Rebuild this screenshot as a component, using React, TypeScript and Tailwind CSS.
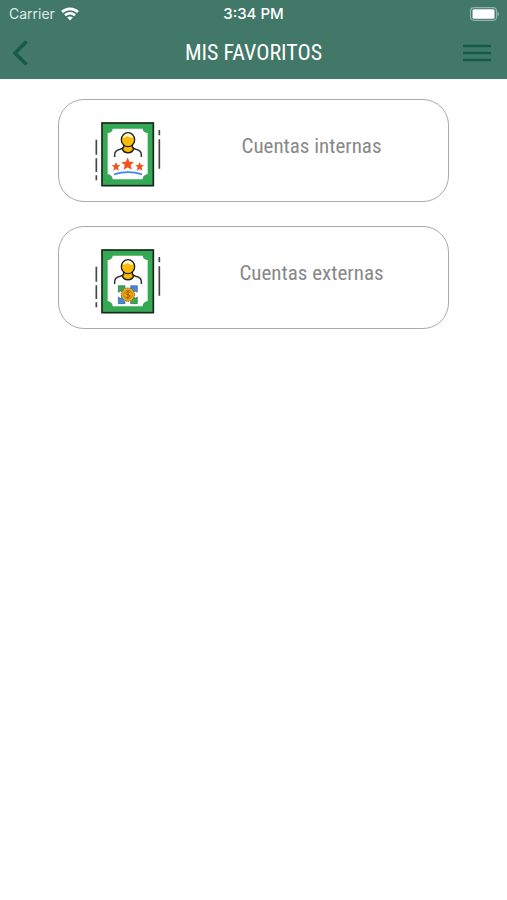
import type { ReactNode } from "react";

function BillFrame({ children }: { children: ReactNode }) {
  return (
    <svg viewBox="29 35 204 198" className="h-[66px] w-[68px] shrink-0" fill="none" aria-hidden="true">
      <rect x="50" y="38" width="154" height="188" fill="#35a853" stroke="#17271d" strokeWidth="5" />
      <path
        d="M82 55H172C172 62 178 68 187 68V192C178 192 172 199 172 207H82C82 199 76 192 67 192V68C76 68 82 62 82 55Z"
        fill="#fff"
      />
      <path d="M33 88V133M33 144V185M33 195V210M222 59V75M222 87V175" stroke="#444" strokeWidth="5" />
      <path
        d="M88 140V133C88 123 96 119 104 117L113 114M143 114L152 117C160 119 168 123 168 133V140"
        stroke="#333"
        strokeWidth="4.5"
      />
      <path d="M115 102V110L111 115C116 131 140 131 145 115L141 110V102Z" fill="#fbbc05" stroke="#222" strokeWidth="4.5" />
      <ellipse cx="128" cy="88" rx="20" ry="21" fill="#fbbc05" />
      <path d="M109 81C112 62 144 62 147 81C139 85 132 80 125 77C121 82 115 83 109 81Z" fill="#fff3d0" />
      <ellipse cx="128" cy="88" rx="20" ry="21" stroke="#222" strokeWidth="4" />
      {children}
    </svg>
  );
}

function InternalIcon() {
  return (
    <BillFrame>
      <path d="M127 141L132 154L146 155L136 164L139 178L127 171L115 178L118 164L108 155L122 154Z" fill="#f4511e" />
      <path d="M92 155L96 164L105 165L98 171L100 181L92 176L84 181L86 171L79 165L88 164Z" fill="#f4511e" />
      <path d="M163 155L167 164L176 165L169 171L171 181L163 176L155 181L157 171L150 165L159 164Z" fill="#f4511e" />
      <path d="M86 192Q128 179 170 192" stroke="#4285f4" strokeWidth="5" />
    </BillFrame>
  );
}

function ExternalIcon() {
  return (
    <BillFrame>
      <g stroke="#28463a" strokeWidth="1.5">
        <path d="M99 145H119V151L114 156L119 162L113 168L106 161L99 165Z" fill="#34a853" />
        <path d="M156 145H136V151L141 156L136 162L142 168L149 161L156 165Z" fill="#4285f4" />
        <path d="M99 199H119V193L114 188L119 182L113 176L106 183L99 179Z" fill="#4285f4" />
        <path d="M156 199H136V193L141 188L136 182L142 176L149 183L156 179Z" fill="#34a853" />
      </g>
      <circle cx="128" cy="172" r="20" fill="#f3a712" stroke="#8a650f" strokeWidth="3" strokeDasharray="5 2" />
      <circle cx="128" cy="172" r="13" stroke="#a8730c" strokeWidth="2" />
      <path
        d="M134 166C131 162 122 162 122 168C122 174 134 170 134 176C134 182 124 182 121 178M128 160V184"
        stroke="#80560a"
        strokeWidth="2.5"
      />
    </BillFrame>
  );
}

function StatusBar() {
  return (
    <div className="grid h-7 grid-cols-3 items-center px-2 font-['Inter',sans-serif] text-sm text-white">
      <div className="flex items-center gap-1.5 pl-px">
        <span className="text-[#dcebe5]">Carrier</span>
        <svg viewBox="0 0 18 14" className="h-3.5 w-[18px]" fill="none" stroke="#fff" strokeWidth="2.8" aria-label="Wi-Fi">
          <path d="M1 5C5.500 .8 12.500 .8 17 5M4 8.300C7 5.600 11 5.600 14 8.300" />
          <path d="M6.200 10.600Q9 8.400 11.800 10.600L9 13.500Z" fill="#fff" stroke="none" />
        </svg>
      </div>
      <span className="text-center text-[15px] font-medium">3:34 PM</span>
      <svg viewBox="0 0 30 14" className="h-3.5 w-[30px] justify-self-end" aria-label="Battery">
        <rect x="1.500" y=".7" width="26" height="12.600" rx="3.500" fill="none" stroke="#8fb3a7" strokeWidth="1.200" />
        <rect x="3.500" y="2.200" width="22" height="9.600" rx="1.500" fill="#fff" />
        <path d="M28.500 4.500Q31.500 7 28.500 9.500Z" fill="#8fb3a7" />
      </svg>
    </div>
  );
}

function App() {
  const accounts = [
    { name: "Cuentas internas", icon: <InternalIcon /> },
    { name: "Cuentas externas", icon: <ExternalIcon /> },
  ];

  return (
    <div className="min-h-screen bg-white font-['Roboto_Condensed','Liberation_Sans_Narrow','Roboto',sans-serif]">
      <header className="bg-[#427868]">
        <StatusBar />
        <div className="flex h-[51px] items-center justify-between px-3 pb-0.5">
          <button type="button" aria-label="Volver" className="flex w-8 items-center">
            <svg viewBox="0 0 16 26" className="h-[26px] w-4" fill="none" stroke="#155c47" strokeWidth="3.500">
              <path d="M14.500 1.500L3 13L14.500 24.500" />
            </svg>
          </button>
          <h1 className="text-[22px] leading-7 font-normal text-white">MIS FAVORITOS</h1>
          <button type="button" aria-label="Menú" className="flex w-8 items-center">
            <svg viewBox="0 0 28 18" className="h-[18px] w-7" stroke="#155c47" strokeWidth="2.600">
              <path d="M0 2H28M0 9H28M0 16H28" />
            </svg>
          </button>
        </div>
      </header>

      {/* Account list */}
      <main className="mx-auto flex w-[77%] flex-col gap-6 pt-5">
        {accounts.map((account) => (
          <button
            key={account.name}
            type="button"
            className="flex h-[103px] w-full items-center gap-3 rounded-[26px] border border-[#aaa] pl-9"
          >
            <span className="pt-2">{account.icon}</span>
            <span className="flex-1 pb-2.5 text-center text-[21px] leading-7 text-[#888]">{account.name}</span>
          </button>
        ))}
      </main>
    </div>
  );
}

export default App;
